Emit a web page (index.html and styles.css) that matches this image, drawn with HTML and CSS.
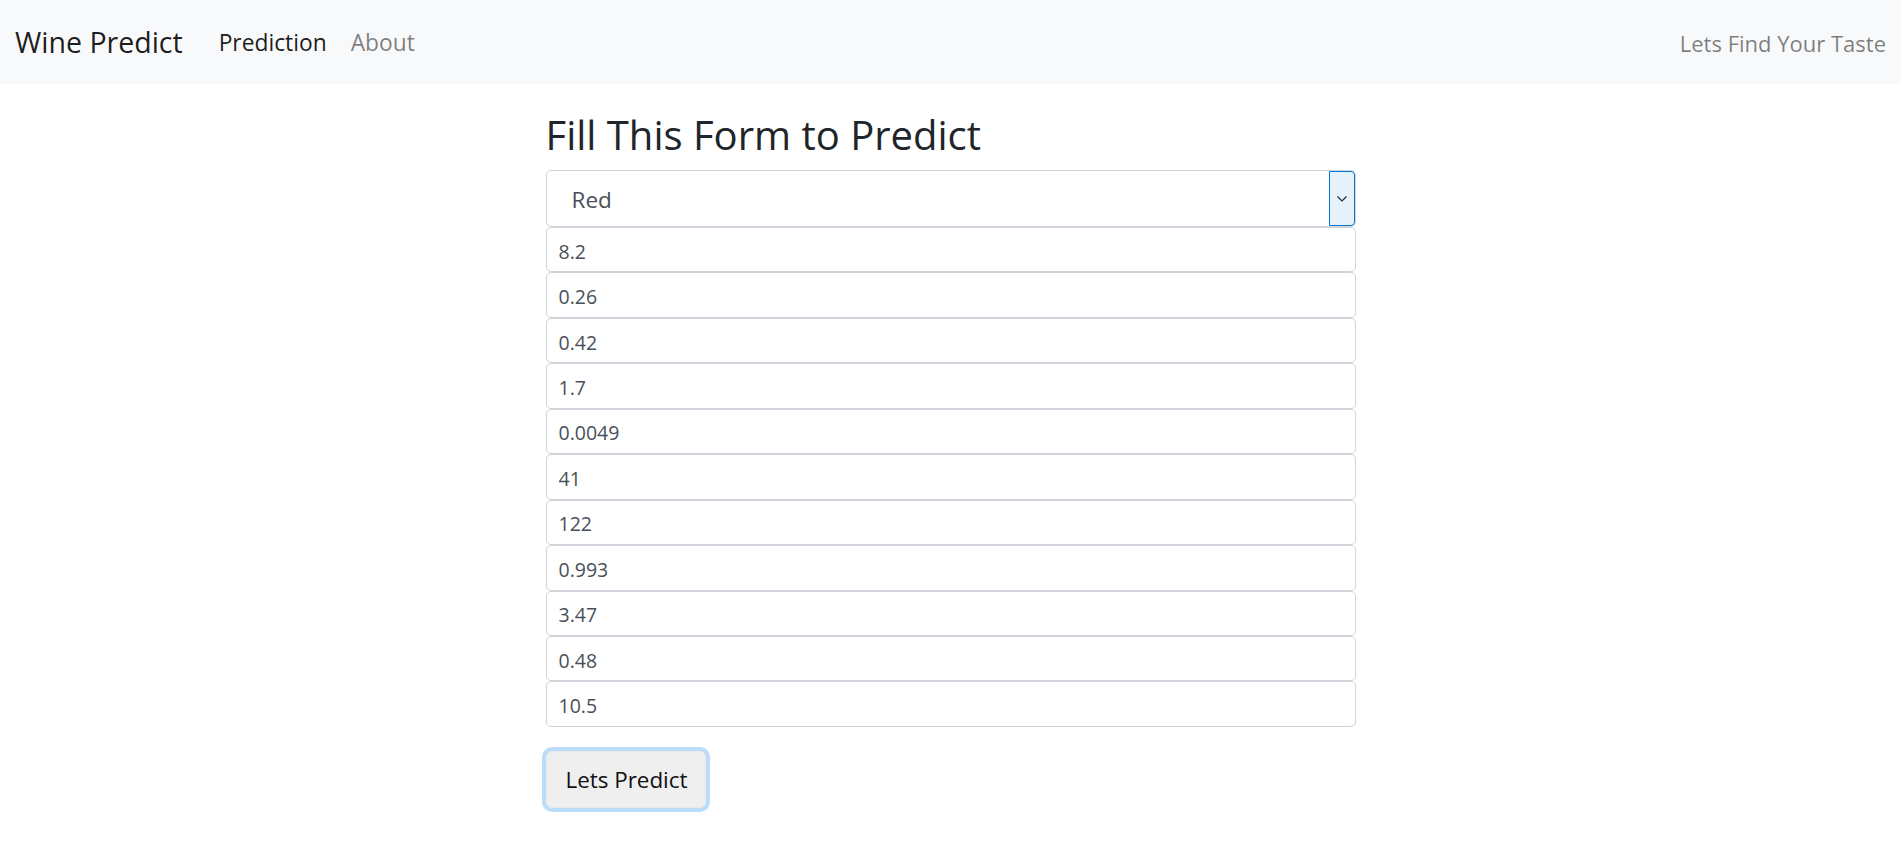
FILE: index.html
```html
<!DOCTYPE html>
<html>
<head>
<meta charset="utf-8">
<title>Wine Predict</title>
<link rel="stylesheet" href="styles.css">
</head>
<body>
<nav class="navbar">
  <a class="brand" href="#">Wine Predict</a>
  <ul class="nav">
    <li><a class="nav-link active" href="#">Prediction</a></li>
    <li><a class="nav-link" href="#">About</a></li>
  </ul>
  <span class="nav-text">Lets Find Your Taste</span>
</nav>
<main class="main">
  <h2 class="title">Fill This Form to Predict</h2>
  <form class="form">
    <div class="select-wrap">
      <select class="form-select">
        <option>Red</option>
        <option>White</option>
      </select>
      <span class="select-arrow">
        <svg width="10" height="6" viewBox="0 0 10 6"><path d="M0.5 0.5 L5 5 L9.5 0.5" fill="none" stroke="#222" stroke-width="1.1"/></svg>
      </span>
    </div>
    <input class="form-input" type="text" value="8.2">
    <input class="form-input" type="text" value="0.26">
    <input class="form-input" type="text" value="0.42">
    <input class="form-input" type="text" value="1.7">
    <input class="form-input" type="text" value="0.0049">
    <input class="form-input" type="text" value="41">
    <input class="form-input" type="text" value="122">
    <input class="form-input" type="text" value="0.993">
    <input class="form-input" type="text" value="3.47">
    <input class="form-input" type="text" value="0.48">
    <input class="form-input" type="text" value="10.5">
    <button class="btn" type="button">Lets Predict</button>
  </form>
</main>
</body>
</html>
```
FILE: styles.css
```css
* { box-sizing: border-box; }
body {
  margin: 0;
  font-family: "Open Sans", "Noto Sans", sans-serif;
  color: #212529;
  background: #fff;
}
.navbar {
  display: flex;
  align-items: center;
  height: 84px;
  padding: 0 15px;
  background: #f8f9fa;
}
.brand {
  font-size: 28.5px;
  line-height: 1.5;
  color: rgba(0, 0, 0, 0.9);
  text-decoration: none;
  margin-right: 24px;
}
.nav {
  display: flex;
  list-style: none;
  margin: 0;
  padding: 0;
}
.nav-link {
  display: block;
  font-size: 22.8px;
  line-height: 1.5;
  padding: 2px 12px 0;
  color: rgba(0, 0, 0, 0.5);
  text-decoration: none;
}
.nav-link.active { color: rgba(0, 0, 0, 0.9); }
.nav-text {
  margin-left: auto;
  font-size: 22px;
  line-height: 1.5;
  padding-top: 2px;
  color: rgba(0, 0, 0, 0.5);
}
.main {
  width: 810px;
  margin: 0 auto;
  padding-bottom: 40px;
}
.title {
  font-size: 40px;
  font-weight: 400;
  line-height: 1.2;
  margin: 27px 0 11px;
  color: #212529;
}
.form {
  display: flex;
  flex-direction: column;
  align-items: flex-start;
}
.select-wrap {
  position: relative;
  width: 100%;
}
.form-select {
  display: block;
  width: 100%;
  height: 57px;
  padding: 2px 30px 0 25px;
  font-family: inherit;
  font-size: 22.5px;
  color: #495057;
  background: #fff;
  border: 1px solid #ced4da;
  border-radius: 5px;
  appearance: none;
  -webkit-appearance: none;
  outline: none;
}
.select-arrow {
  position: absolute;
  top: 1px;
  right: 1px;
  bottom: 1px;
  width: 26px;
  display: flex;
  align-items: center;
  justify-content: center;
  background: #e5f1fb;
  border: 1px solid #0078d7;
  border-radius: 0 4px 4px 0;
}
.form-input {
  display: block;
  width: 100%;
  height: 45.45px;
  padding: 3px 12px 0;
  font-family: inherit;
  font-size: 19.5px;
  color: #495057;
  background: #fff;
  border: 1px solid #ced4da;
  border-radius: 5px;
  outline: none;
}
.btn {
  margin: 24px 0 8px;
  width: 160px;
  height: 57px;
  padding: 0 0 0 19px;
  text-align: left;
  font-family: inherit;
  font-size: 22.4px;
  color: #111;
  background: #efefef;
  border: 1px solid #e9e9e9;
  border-radius: 6px;
  box-shadow: 0 0 0 4px #bcdcfb;
}
```
